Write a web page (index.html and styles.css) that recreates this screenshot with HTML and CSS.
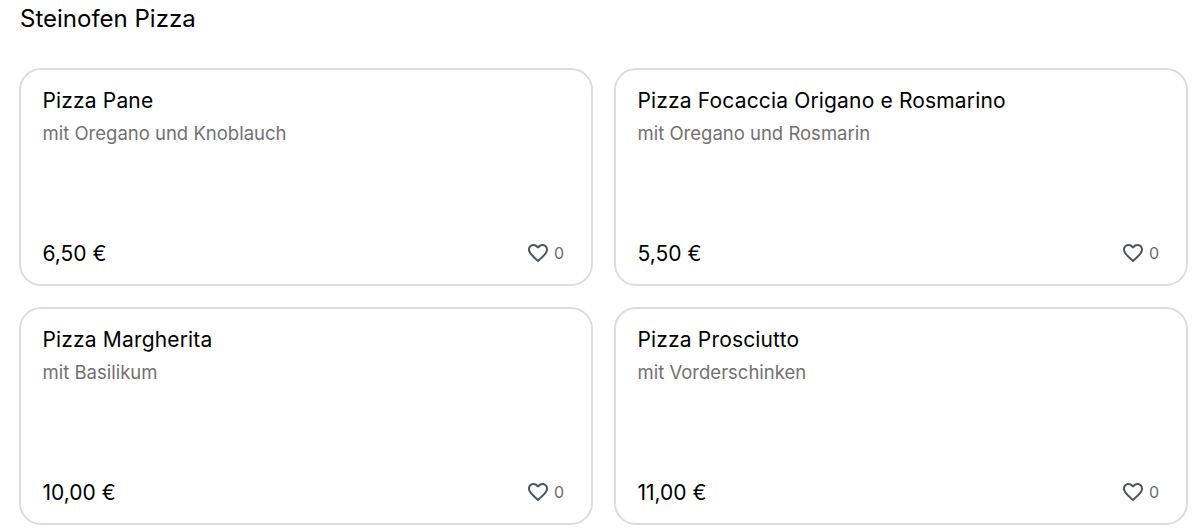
FILE: index.html
```html
<!DOCTYPE html>
<html lang="de"><head><meta charset="utf-8">
<title>Steinofen Pizza</title>
<meta name="viewport" content="width=device-width, initial-scale=1.0"/>
<link rel="stylesheet" href="styles.css">
</head>
<body>

<svg class="defs">
	<symbol id="heart" viewBox="0 0 24 24">
		<path d="M16.5 3c-1.74 0-3.41.81-4.5 2.09C10.91 3.81 9.24 3 7.5 3 4.42 3 2 5.42 2 8.5c0 3.78 3.4 6.86 8.55 11.54L12 21.35l1.45-1.32C18.6 15.36 22 12.28 22 8.5 22 5.42 19.58 3 16.5 3zm-4.4 15.55l-.1.1-.1-.1C7.14 14.24 4 11.39 4 8.5 4 6.5 5.5 5 7.5 5c1.54 0 3.04.99 3.57 2.36h1.87C13.46 5.99 14.96 5 16.5 5c2 0 3.5 1.5 3.5 3.5 0 2.89-3.14 5.74-7.9 10.05z"/>
	</symbol>
</svg>

<h2>Steinofen Pizza</h2>

<div id="main">
	<div class="item">
		<div class="name">Pizza Pane</div>
		<div class="info">mit Oregano und Knoblauch</div>
		<div class="foot">
			<div class="price">6,50 €</div>
			<button class="like"><svg><use href="#heart"/></svg><span>0</span></button>
		</div>
	</div>
	<div class="item">
		<div class="name">Pizza Focaccia Origano e Rosmarino</div>
		<div class="info">mit Oregano und Rosmarin</div>
		<div class="foot">
			<div class="price">5,50 €</div>
			<button class="like"><svg><use href="#heart"/></svg><span>0</span></button>
		</div>
	</div>
	<div class="item">
		<div class="name">Pizza Margherita</div>
		<div class="info">mit Basilikum</div>
		<div class="foot">
			<div class="price">10,00 €</div>
			<button class="like"><svg><use href="#heart"/></svg><span>0</span></button>
		</div>
	</div>
	<div class="item">
		<div class="name">Pizza Prosciutto</div>
		<div class="info">mit Vorderschinken</div>
		<div class="foot">
			<div class="price">11,00 €</div>
			<button class="like"><svg><use href="#heart"/></svg><span>0</span></button>
		</div>
	</div>
</div>

</body>
</html>
```
FILE: styles.css
```css
* {
	box-sizing: border-box;
}
body {
	margin: 0;
	padding: 2px 12px 0 19px;
	font-family: Inter, sans-serif;
	background-color: #fff;
	color: #000;
}
.defs {
	display: none;
}
h2 {
	margin: 0 0 32px 1px;
	font-size: 24px;
	font-weight: 400;
	line-height: 34px;
}
#main {
	display: grid;
	grid-template-columns: 1fr 1fr;
	gap: 21px;
}
.item {
	display: flex;
	flex-direction: column;
	height: 218px;
	padding: 15px 22px 14px 21.5px;
	border: 2px solid #ddd;
	border-radius: 22px;
}
.item .name {
	font-size: 21px;
	line-height: 32px;
	letter-spacing: .16px;
}
.item .info {
	font-size: 18.5px;
	line-height: 32px;
	color: #717171;
}
.item .foot {
	display: flex;
	justify-content: space-between;
	align-items: center;
	margin-top: auto;
}
.item .price {
	font-size: 21px;
	line-height: 32px;
}
.item .like {
	display: flex;
	align-items: center;
	gap: 4px;
	margin: 0 0 2px;
	padding: 0 5px 0 0;
	border: 0;
	background: none;
	font-family: inherit;
	font-size: 16px;
	color: #6b6b6b;
}
.item .like svg {
	width: 24px;
	height: 24px;
	fill: #4b5563;
}
```
